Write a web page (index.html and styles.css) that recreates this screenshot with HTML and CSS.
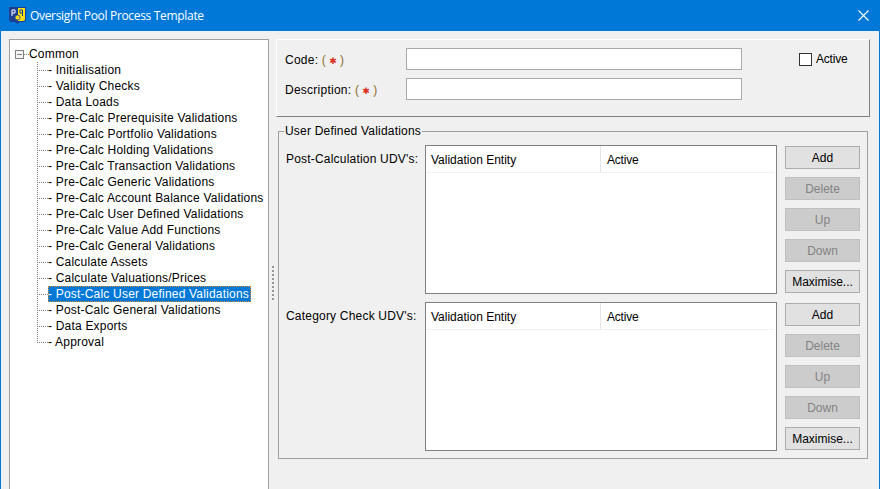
FILE: index.html
```html
<!DOCTYPE html>
<html lang="en">
<head>
    <meta charset="UTF-8">
    <meta name="viewport" content="width=device-width, initial-scale=1.0">
    <title>Oversight Pool Process Template</title>
    <link rel="stylesheet" href="styles.css">
</head>
<body>
<div class="window">
    <header class="titlebar">
        <svg class="app-icon" width="17" height="17" viewBox="0 0 17 17">
            <path d="M0 0H17V12Q17 15 14 15H11L8.500 17L6 15H3Q0 15 0 12Z" fill="#1c3f94"/>
            <path d="M9 1H16V12Q16 14 14 14H9Z" fill="#f7e017"/>
            <path d="M3 9V3H6V6H3" fill="none" stroke="#fff" stroke-width="1"/>
            <path d="M13.500 9V3H11V6H13.500" fill="none" stroke="#1c3f94" stroke-width="1"/>
            <circle cx="8.500" cy="10.500" r="2.500" fill="#f7e017" stroke="#1c3f94" stroke-width="0.800"/>
        </svg>
        <span class="title">Oversight Pool Process Template</span>
        <svg class="close-icon" width="11" height="11" viewBox="0 0 11 11">
            <path d="M0.500 0.500L10.500 10.500M10.500 0.500L0.500 10.500" stroke="#fff" stroke-width="1.100" fill="none"/>
        </svg>
    </header>

    <div class="content">
        <nav class="tree-pane">
            <div class="tree-root">
                <span class="expander"></span>
                <span class="root-dots"></span>
                <span>Common</span>
            </div>
            <ul class="tree">
                <li><span class="node">- Initialisation</span></li>
                <li><span class="node">- Validity Checks</span></li>
                <li><span class="node">- Data Loads</span></li>
                <li><span class="node">- Pre-Calc Prerequisite Validations</span></li>
                <li><span class="node">- Pre-Calc Portfolio Validations</span></li>
                <li><span class="node">- Pre-Calc Holding Validations</span></li>
                <li><span class="node">- Pre-Calc Transaction Validations</span></li>
                <li><span class="node">- Pre-Calc Generic Validations</span></li>
                <li><span class="node">- Pre-Calc Account Balance Validations</span></li>
                <li><span class="node">- Pre-Calc User Defined Validations</span></li>
                <li><span class="node">- Pre-Calc Value Add Functions</span></li>
                <li><span class="node">- Pre-Calc General Validations</span></li>
                <li><span class="node">- Calculate Assets</span></li>
                <li><span class="node">- Calculate Valuations/Prices</span></li>
                <li><span class="node selected">- Post-Calc User Defined Validations</span></li>
                <li><span class="node">- Post-Calc General Validations</span></li>
                <li><span class="node">- Data Exports</span></li>
                <li><span class="node">- Approval</span></li>
            </ul>
        </nav>

        <div class="splitter">
            <i></i><i></i><i></i><i></i><i></i><i></i><i></i><i></i><i></i>
        </div>

        <main class="main-pane">
            <section class="top-panel">
                <label class="field-label">Code: <span class="req">(<b>✱</b>)</span></label>
                <input class="text-input" type="text">
                <label class="check-label"><span class="checkbox"></span>Active</label>
                <label class="field-label">Description: <span class="req">(<b>✱</b>)</span></label>
                <input class="text-input" type="text">
            </section>

            <fieldset class="group">
                <legend>User Defined Validations</legend>

                <div class="udv-row">
                    <div class="udv-label">Post-Calculation UDV's:</div>
                    <div class="grid-box">
                        <div class="grid-head">
                            <div class="col-entity">Validation Entity</div>
                            <div class="col-active">Active</div>
                        </div>
                    </div>
                    <div class="buttons">
                        <button class="btn">Add</button>
                        <button class="btn" disabled>Delete</button>
                        <button class="btn" disabled>Up</button>
                        <button class="btn" disabled>Down</button>
                        <button class="btn">Maximise...</button>
                    </div>
                </div>

                <div class="udv-row">
                    <div class="udv-label">Category Check UDV's:</div>
                    <div class="grid-box">
                        <div class="grid-head">
                            <div class="col-entity">Validation Entity</div>
                            <div class="col-active">Active</div>
                        </div>
                    </div>
                    <div class="buttons">
                        <button class="btn">Add</button>
                        <button class="btn" disabled>Delete</button>
                        <button class="btn" disabled>Up</button>
                        <button class="btn" disabled>Down</button>
                        <button class="btn">Maximise...</button>
                    </div>
                </div>
            </fieldset>
        </main>
    </div>
</div>
</body>
</html>
```

FILE: styles.css
```css
* {
    box-sizing: border-box;
}

body {
    margin: 0;
    height: 489px;
    overflow: hidden;
    background-color: #f0f0f0;
    color: #000;
    font-family: "Liberation Sans", Arial, sans-serif;
    font-size: 12px;
}

.window {
    height: 489px;
    border-left: 1px solid #0078d7;
    border-right: 1px solid #0078d7;
    display: flex;
    flex-direction: column;
    overflow: hidden;
}

.titlebar {
    height: 31px;
    flex: none;
    background-color: #0078d7;
    color: #fff;
    display: flex;
    align-items: center;
    padding: 0 10px 0 8px;
}

.app-icon {
    flex: none;
    margin-right: 4px;
}

.title {
    flex: 1;
    font-family: "Open Sans", sans-serif;
    font-size: 12px;
    letter-spacing: -0.32px;
}

.content {
    flex: 1;
    display: flex;
    padding: 8px 8px 0 8px;
    min-height: 0;
}

/* left tree */
.tree-pane {
    width: 260px;
    height: 480px;
    flex: none;
    background-color: #fff;
    border: 1px solid #a0a0a0;
    padding: 6px 0 0 5px;
    letter-spacing: 0.2px;
}

.tree-root {
    height: 16px;
    display: flex;
    align-items: center;
}

.expander {
    width: 9px;
    height: 9px;
    border: 1px solid #808080;
    background: linear-gradient(#808080, #808080) center / 5px 1px no-repeat #f4f4f4;
}

.root-dots {
    width: 5px;
    border-top: 1px dotted #808080;
}

.tree {
    list-style: none;
    margin: 0;
    padding: 0 0 0 22px;
}

.tree li {
    height: 16px;
    display: flex;
    align-items: center;
    background: repeating-linear-gradient(#808080 0 1px, transparent 1px 2px) 0 0 / 1px 100% no-repeat;
}

.tree li:last-child {
    background-size: 1px 50%;
}

.tree li::before {
    content: "";
    width: 11px;
    flex: none;
    border-top: 1px dotted #808080;
}

.node {
    padding: 0 2px 0 0;
    line-height: 16px;
    white-space: nowrap;
}

.selected {
    background-color: #0078d7;
    color: #fff;
    outline: 1px dotted #e08a2c;
    outline-offset: -1px;
}

/* grip between the panes */
.splitter {
    width: 7px;
    flex: none;
    height: 450px;
    display: flex;
    flex-direction: column;
    align-items: center;
    justify-content: center;
    gap: 2px;
    padding-top: 37px;
}

.splitter i {
    width: 2px;
    height: 2px;
    background-color: #999;
}

/* right side */
.main-pane {
    flex: 1;
    min-width: 0;
}

.top-panel {
    height: 78px;
    margin-right: 1px;
    border: 1px solid;
    border-color: #fff #808080 #808080 #fff;
    display: grid;
    grid-template-columns: 121px 336px 1fr;
    grid-template-rows: 22px 22px;
    row-gap: 8px;
    align-items: center;
    padding: 8px 0 0 8px;
}

.field-label {
    white-space: nowrap;
    letter-spacing: 0.25px;
    padding-top: 2px;
}

.req {
    color: #8a6d2f;
}

.req b {
    display: inline-block;
    width: 14px;
    text-align: center;
    color: #d8321c;
    font-size: 9px;
    font-family: "DejaVu Sans", sans-serif;
}

.text-input {
    height: 22px;
    width: 336px;
    border: 1px solid #a9a9a9;
    background-color: #fff;
    padding: 0 3px;
}

.check-label {
    display: flex;
    align-items: center;
    padding-left: 57px;
    letter-spacing: -0.2px;
}

.checkbox {
    width: 13px;
    height: 13px;
    border: 1px solid #333;
    background-color: #fff;
    margin-right: 4px;
}

.group {
    margin: 7px 3px 0 2px;
    padding: 7px 7px 7px 6px;
    border: 1px solid #a0a0a0;
    min-width: 0;
}

.group legend {
    padding: 0 1px;
    margin-left: -1px;
    line-height: 14px;
    letter-spacing: 0.2px;
}

.udv-row {
    display: flex;
    height: 149px;
}

.udv-row + .udv-row {
    margin-top: 8px;
}

.udv-label {
    width: 140px;
    flex: none;
    padding: 7px 0 0 1px;
    letter-spacing: 0.2px;
}

.grid-box {
    width: 352px;
    flex: none;
    border: 1px solid #808080;
    background-color: #fff;
}

.grid-head {
    display: flex;
    height: 27px;
    line-height: 28px;
    border-bottom: 1px solid #f0f0f0;
    margin-right: 2px;
}

.col-entity {
    width: 175px;
    padding-left: 5px;
    border-right: 1px solid #e4e4e4;
}

.col-active {
    padding-left: 6px;
    letter-spacing: -0.2px;
}

.buttons {
    margin-left: 8px;
    padding-top: 1px;
    display: flex;
    flex-direction: column;
    gap: 8px;
}

.btn {
    width: 75px;
    height: 23px;
    padding: 0;
    border: 1px solid #adadad;
    background-color: #e1e1e1;
    color: #000;
    font-family: inherit;
    font-size: 12px;
}

.btn:disabled {
    background-color: #ccc;
    border-color: #bfbfbf;
    color: #838383;
}
```
